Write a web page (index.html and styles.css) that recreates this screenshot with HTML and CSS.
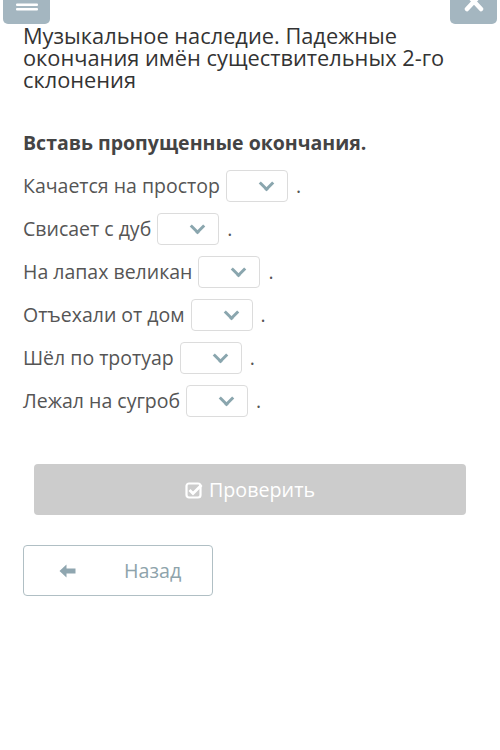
FILE: index.html
```html
<!DOCTYPE html>
<html lang="ru">
<head>
    <meta charset="UTF-8">
    <meta name="viewport" content="width=device-width, initial-scale=1.0">
    <title>Падежные окончания</title>
    <link rel="stylesheet" href="styles.css">
</head>
<body>
    <!-- Top bar -->
    <div class="top-bar">
        <div class="top-button">
            <svg width="22" height="14" viewBox="0 0 22 14">
                <rect x="0" y="3.5" width="22" height="2.5" rx="1" fill="#fff"/>
                <rect x="0" y="8" width="22" height="2.5" rx="1" fill="#fff"/>
            </svg>
        </div>
        <div class="top-button">
            <svg width="20" height="14" viewBox="0 0 20 14">
                <path d="M3 -6 L17 9 M17 -6 L3 9" stroke="#fff" stroke-width="4.5" fill="none" stroke-linecap="round"/>
            </svg>
        </div>
    </div>

    <div class="content">
        <h1 class="task-title">Музыкальное наследие. Падежные окончания имён существительных 2-го склонения</h1>

        <p class="task-instruction">Вставь пропущенные окончания.</p>

        <div class="task-rows">
            <div class="task-row"><span>Качается на простор</span><div class="select-box"><span class="chevron"></span></div><span class="dot">.</span></div>
            <div class="task-row"><span>Свисает с дуб</span><div class="select-box"><span class="chevron"></span></div><span class="dot">.</span></div>
            <div class="task-row"><span>На лапах великан</span><div class="select-box"><span class="chevron"></span></div><span class="dot">.</span></div>
            <div class="task-row"><span>Отъехали от дом</span><div class="select-box"><span class="chevron"></span></div><span class="dot">.</span></div>
            <div class="task-row"><span>Шёл по тротуар</span><div class="select-box"><span class="chevron"></span></div><span class="dot">.</span></div>
            <div class="task-row"><span>Лежал на сугроб</span><div class="select-box"><span class="chevron"></span></div><span class="dot">.</span></div>
        </div>

        <button class="check-button">
            <svg width="18" height="18" viewBox="0 0 18 18">
                <rect x="1.5" y="2.5" width="14" height="14" rx="2.5" stroke="#fff" stroke-width="2.2" fill="none"/>
                <path d="M4.5 9 L8 12.5 L16.5 4" stroke="#fff" stroke-width="2.8" fill="none"/>
            </svg>
            <span>Проверить</span>
        </button>

        <button class="back-button">
            <svg width="17" height="14" viewBox="0 0 17 14">
                <path d="M0.5 7 L7.5 0.5 L7.5 4.5 L16.5 4.5 L16.5 9.5 L7.5 9.5 L7.5 13.5 Z" fill="#8fa6b0"/>
            </svg>
            <span>Назад</span>
        </button>
    </div>
</body>
</html>
```

FILE: styles.css
```css
body {
    margin: 0;
    font-family: "Open Sans", Arial, sans-serif;
    background-color: #fff;
    color: #333;
}
.top-bar {
    display: flex;
    justify-content: space-between;
    padding: 0 3px;
    height: 24px;
}
.top-button {
    width: 47px;
    height: 24px;
    background-color: #a4b6c0;
    border-radius: 0 0 5px 5px;
    display: flex;
    justify-content: center;
    align-items: flex-start;
}
.top-button svg {
    display: block;
    overflow: visible;
}
.content {
    padding: 0 23px;
}
.task-title {
    margin: 1px 0 0;
    font-size: 21.8px;
    font-weight: normal;
    line-height: 22px;
    color: #333;
}
.task-instruction {
    margin: 40px 0 9px;
    font-size: 19.5px;
    font-weight: bold;
    line-height: 24px;
    color: #444;
}
.task-row {
    display: flex;
    align-items: center;
    height: 43px;
    font-size: 19.5px;
    color: #555;
}
.select-box {
    width: 60px;
    height: 30px;
    margin-left: 6px;
    border: 1px solid #dcdcdc;
    border-radius: 4px;
    position: relative;
}
.chevron {
    position: absolute;
    right: 15px;
    top: 7px;
    width: 8px;
    height: 8px;
    border-right: 3px solid #8aa6ae;
    border-bottom: 3px solid #8aa6ae;
    transform: rotate(45deg);
}
.dot {
    margin-left: 8px;
}
.check-button {
    display: flex;
    justify-content: center;
    align-items: center;
    gap: 6px;
    width: 432px;
    height: 51px;
    margin: 42px 0 0 11px;
    border: none;
    border-radius: 4px;
    background-color: #cccccc;
    color: #fff;
    font-family: "Open Sans", Arial, sans-serif;
    font-size: 19.7px;
}
.back-button {
    display: flex;
    align-items: center;
    gap: 48px;
    width: 190px;
    height: 51px;
    margin-top: 30px;
    padding: 0 0 0 35px;
    border: 1px solid #b0bfc4;
    border-radius: 4px;
    background-color: #fff;
    color: #8ea3ab;
    font-family: "Open Sans", Arial, sans-serif;
    font-size: 19.7px;
}
```
